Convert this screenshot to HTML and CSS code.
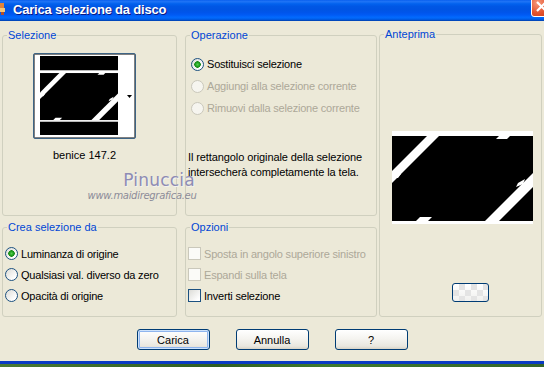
FILE: index.html
```html
<html>
  <head>
    <link rel="stylesheet" href="styles.css">
  </head>
  <body>
    <div class="dialog">
      <div class="titlebar">
        <svg class="app-icon" width="6" height="14" viewBox="0 0 6 14">
          <rect x="0" y="1" width="4" height="5" fill="#e0843a" />
          <rect x="0" y="6" width="5" height="4" fill="#f3c77a" />
          <rect x="1" y="10" width="3" height="3" fill="#b4502a" />
        </svg>
        <span class="title">Carica selezione da disco</span>
        <span class="close-btn">
          <svg width="21" height="21" viewBox="0 0 21 21">
            <path d="M6 6 L15 15 M15 6 L6 15" stroke="#fff" stroke-width="2.2" />
          </svg>
        </span>
      </div>

      <svg class="defs" width="0" height="0">
        <symbol id="sel-img" viewBox="0 0 141 93">
          <rect x="0" y="0" width="141" height="93" fill="#fff" />
          <rect x="0" y="5" width="141" height="85" fill="#000" />
          <polygon points="0,40 35,5 47,5 0,52" fill="#fff" />
          <polygon points="0,43 9,43 6,47 0,47" fill="#fff" />
          <polygon points="104,8 107,5 118,5 115,8" fill="#fff" />
          <polygon points="141,42 141,56 107,90 93,90" fill="#fff" />
          <polygon points="126,52 133,48 131,53 124,56" fill="#fff" />
          <polygon points="24,90 28,86 40,86 36,90" fill="#fff" />
        </symbol>
      </svg>

      <div class="panes">
        <fieldset class="group sel">
          <legend>Selezione</legend>
          <div class="thumb">
            <svg width="101" height="84" viewBox="0 0 101 84">
              <rect x="6" y="2" width="78" height="79" fill="#000" />
              <use href="#sel-img" x="6" y="16" width="78" height="52" preserveAspectRatio="none" />
              <polygon points="93,41 98,41 95.5,44" fill="#000" />
              <rect x="0.5" y="0.5" width="100" height="83" fill="none" stroke="#000" stroke-dasharray="1 1" />
            </svg>
          </div>
          <div class="thumb-name">benice 147.2</div>
        </fieldset>

        <fieldset class="group op">
          <legend>Operazione</legend>
          <div class="choices">
            <label class="choice"><input type="radio" name="op" checked> Sostituisci selezione</label>
            <label class="choice off"><input type="radio" name="op" disabled> Aggiungi alla selezione corrente</label>
            <label class="choice off"><input type="radio" name="op" disabled> Rimuovi dalla selezione corrente</label>
          </div>
          <p class="note">Il rettangolo originale della selezione<br>intersecherà completamente la tela.</p>
        </fieldset>

        <fieldset class="group preview">
          <legend>Anteprima</legend>
          <svg class="preview-img" width="141" height="93">
            <use href="#sel-img" x="0" y="0" width="141" height="93" />
          </svg>
          <button class="swatch"></button>
        </fieldset>

        <fieldset class="group src">
          <legend>Crea selezione da</legend>
          <div class="choices tight">
            <label class="choice"><input type="radio" name="src" checked> Luminanza di origine</label>
            <label class="choice"><input type="radio" name="src"> Qualsiasi val. diverso da zero</label>
            <label class="choice"><input type="radio" name="src"> Opacità di origine</label>
          </div>
        </fieldset>

        <fieldset class="group opts">
          <legend>Opzioni</legend>
          <div class="choices tight">
            <label class="choice off"><input type="checkbox" disabled> Sposta in angolo superiore sinistro</label>
            <label class="choice off"><input type="checkbox" disabled> Espandi sulla tela</label>
            <label class="choice"><input type="checkbox"> Inverti selezione</label>
          </div>
        </fieldset>
      </div>

      <div class="actions">
        <button class="btn default">Carica</button>
        <button class="btn">Annulla</button>
        <button class="btn">?</button>
      </div>

      <div class="frame-bottom"></div>

      <div class="watermark">
        <div class="wm-name">Pinuccia</div>
        <div class="wm-url">www.maidiregrafica.eu</div>
      </div>
    </div>
  </body>
</html>
```

FILE: styles.css
```css
body {
  margin: 0;
  background: #3b6e2c;
}

.dialog {
  position: relative;
  width: 544px;
  height: 367px;
  overflow: hidden;
  background: #ece9d8;
  font-family: "Liberation Sans", Arial, sans-serif;
  font-size: 11px;
  color: #000;
  display: flex;
  flex-direction: column;
}

/* title bar, XP luna blue */
.titlebar {
  height: 21px;
  flex: none;
  display: flex;
  align-items: flex-start;
  overflow: hidden;
  background: linear-gradient(to bottom, #0a60ee 0%, #1f74f6 8%, #0262ee 18%, #0057e5 30%, #0054e3 45%, #0055eb 60%, #005bf5 72%, #026afe 82%, #0062ef 90%, #0052d6 95%, #003ea6 100%);
}
.app-icon {
  margin-top: 2px;
  flex: none;
}
.title {
  margin-left: 7px;
  margin-top: 2px;
  color: #fff;
  font-weight: bold;
  font-size: 13px;
  line-height: 16px;
  letter-spacing: -0.2px;
  text-shadow: 1px 1px #0a1883;
}
.close-btn {
  margin-left: auto;
  margin-top: -4px;
  margin-right: -8px;
  width: 21px;
  height: 21px;
  flex: none;
  border: 1px solid #fff;
  border-radius: 3px;
  box-sizing: border-box;
  background: radial-gradient(circle at 30% 30%, #f59a7e, #e4532d 55%, #c63a1a);
}
.close-btn svg {
  display: block;
  margin: -1px;
}

.defs {
  position: absolute;
}

/* group boxes */
.panes {
  display: grid;
  grid-template-columns: 175px 8px 192px 2px 163px;
  grid-template-rows: 187px 96px;
  row-gap: 5px;
  margin: 8px 0 0 2px;
}
.group {
  margin: 0;
  padding: 0;
  border: 1px solid #d0d0bf;
  border-radius: 3px;
  min-width: 0;
}
.group legend {
  color: #0046d5;
  padding: 0 1px;
  margin-left: 4px;
  line-height: 13px;
}
.sel { grid-column: 1; grid-row: 1; }
.op { grid-column: 3; grid-row: 1; }
.preview { grid-column: 5; grid-row: 1 / 3; margin-top: -1px; }
.src { grid-column: 1; grid-row: 2; }
.opts { grid-column: 3; grid-row: 2; }

.sel {
  display: flex;
  flex-direction: column;
  align-items: center;
  padding-right: 10px;
}
.thumb {
  margin-top: 11px;
  width: 101px;
  height: 84px;
  border: 1px solid #3d6485;
  border-radius: 2px;
  background: #fff;
}
.thumb svg {
  display: block;
}
.thumb-name {
  margin-top: 10px;
  line-height: 13px;
}

.choices {
  margin-top: 11px;
  padding-left: 5px;
  letter-spacing: -0.2px;
}
.choices.tight {
  margin-top: 9px;
  padding-left: 2px;
}
.choice {
  display: flex;
  align-items: center;
  height: 22px;
  white-space: nowrap;
}
.choices.tight .choice {
  height: 21px;
}
.choice.off {
  color: #aca899;
}
.choice input {
  appearance: none;
  -webkit-appearance: none;
  margin: 0 3px 0 0;
  width: 13px;
  height: 13px;
  flex: none;
  border: 1px solid #1c5180;
  background: linear-gradient(135deg, #dcdcd7, #ffffff 80%);
}
.choice input[type="radio"] {
  border-radius: 50%;
}
.choice input[type="radio"]:checked {
  background: radial-gradient(circle, #55d051 0, #21a121 2px, #1b8a1b 3px, transparent 3.5px), linear-gradient(135deg, #dcdcd7, #ffffff 80%);
}
.choice input:disabled {
  border-color: #cac8bb;
  background: #f6f5ef;
}
.choice input[type="checkbox"] {
  border-radius: 0;
  background: linear-gradient(135deg, #dcdcd7, #ffffff 85%);
}
.choice input[type="checkbox"]:disabled {
  background: #fbfbf8;
}

.note {
  margin: 31px 0 0 2px;
  line-height: 15px;
  letter-spacing: -0.1px;
}

.preview {
  display: flex;
  flex-direction: column;
}
.preview-img {
  display: block;
  margin: 90px 0 0 12px;
}
.swatch {
  margin: 59px 0 0 72px;
  width: 37px;
  height: 19px;
  padding: 0;
  border: 1px solid #003c74;
  border-radius: 3px;
  background:
    linear-gradient(45deg, #e4e4e4 25%, transparent 25%, transparent 75%, #e4e4e4 75%),
    linear-gradient(45deg, #e4e4e4 25%, transparent 25%, transparent 75%, #e4e4e4 75%),
    linear-gradient(#ffffff, #f0f0ee);
  background-size: 12px 12px, 12px 12px, auto;
  background-position: 0 0, 6px 6px, 0 0;
}

/* bottom buttons */
.actions {
  display: flex;
  justify-content: center;
  gap: 26px;
  margin-top: 12px;
}
.btn {
  width: 73px;
  height: 21px;
  padding: 0;
  font-family: "Liberation Sans", Arial, sans-serif;
  font-size: 11px;
  color: #000;
  border: 1px solid #003c74;
  border-radius: 3px;
  background: linear-gradient(#ffffff, #f5f4f0 45%, #e9e7df 85%, #d8d3c6);
}
.btn.default {
  box-shadow: inset 0 0 0 1px #cde2fb, inset 0 0 0 2px #8fb5ee;
}

.frame-bottom {
  margin-top: auto;
  height: 6px;
  border-top: 3px solid #0a3bc4;
  background: linear-gradient(to right, #4a7a34, #2f5e22 40%, #3f7a2e 60%, #34652a);
  box-sizing: border-box;
}

/* watermark drawn on top of the screenshot */
.watermark {
  position: absolute;
  left: 80px;
  top: 170px;
  width: 124px;
  text-align: center;
  pointer-events: none;
}
.wm-name {
  font-family: "DejaVu Sans", sans-serif;
  font-size: 17px;
  line-height: 20px;
  color: #8e8cb4;
  letter-spacing: 0.2px;
  padding-left: 34px;
  text-shadow: 1px 1px #f4f3ee;
}
.wm-url {
  font-family: "DejaVu Sans", sans-serif;
  font-size: 10px;
  line-height: 12px;
  color: #8c8c99;
  font-style: italic;
  letter-spacing: -0.3px;
}
```
